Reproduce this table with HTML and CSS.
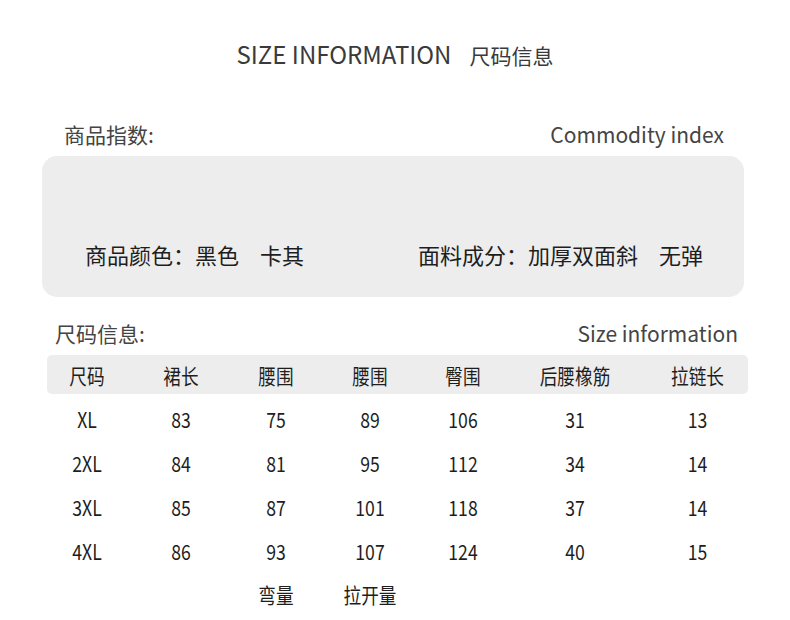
FILE: index.html
```html
<!DOCTYPE html>
<html>
<head>
<meta charset="utf-8">
<link rel="stylesheet" href="styles.css">
</head>
<body>
<div class="page">
  <h1 class="title">SIZE INFORMATION<span class="title-cn">尺码信息</span></h1>

  <div class="section-head head1">
    <span class="cn">商品指数:</span>
    <span class="en">Commodity index</span>
  </div>
  <div class="info-box">
    <div class="info-item">商品颜色：黑色<span class="gap"></span>卡其</div>
    <div class="info-item">面料成分：加厚双面斜<span class="gap"></span>无弹</div>
  </div>

  <div class="section-head head2">
    <span class="cn">尺码信息:</span>
    <span class="en">Size information</span>
  </div>

  <div class="table">
    <div class="row header">
      <span>尺码</span><span>裙长</span><span>腰围</span><span>腰围</span><span>臀围</span><span>后腰橡筋</span><span>拉链长</span>
    </div>
    <div class="row">
      <span>XL</span><span>83</span><span>75</span><span>89</span><span>106</span><span>31</span><span>13</span>
    </div>
    <div class="row">
      <span>2XL</span><span>84</span><span>81</span><span>95</span><span>112</span><span>34</span><span>14</span>
    </div>
    <div class="row">
      <span>3XL</span><span>85</span><span>87</span><span>101</span><span>118</span><span>37</span><span>14</span>
    </div>
    <div class="row">
      <span>4XL</span><span>86</span><span>93</span><span>107</span><span>124</span><span>40</span><span>15</span>
    </div>
    <div class="row note">
      <span></span><span></span><span>弯量</span><span>拉开量</span><span></span><span></span><span></span>
    </div>
  </div>
</div>
</body>
</html>
```

FILE: styles.css
```css
* { box-sizing: border-box; }
html, body {
  margin: 0;
  padding: 0;
  background: #ffffff;
}
body {
  font-family: "Noto Sans CJK SC", "Noto Sans", sans-serif;
  color: #222;
}
.page {
  width: 790px;
  height: 620px;
  padding-top: 37px;
  overflow: hidden;
}
.title {
  margin: 0;
  text-align: center;
  font-size: 24px;
  font-weight: 400;
  line-height: 34px;
  color: #3a3a3a;
  letter-spacing: 0;
}
.title-cn {
  margin-left: 18px;
  font-size: 21px;
}
.section-head {
  display: flex;
  justify-content: space-between;
  align-items: center;
  font-size: 21px;
  line-height: 28px;
  color: #444;
}
.head1 {
  margin-top: 48px;
  padding: 0 66px 0 64px;
}
.head2 {
  margin-top: 22px;
  padding: 0 52px 0 55px;
}
.info-box {
  margin: 8px 46px 0 42px;
  height: 141px;
  background: #ededed;
  border-radius: 15px;
  display: flex;
  align-items: flex-end;
  padding: 0 41px 28px 43px;
  justify-content: space-between;
  font-size: 22px;
  line-height: 30px;
  color: #1e1e1e;
}
.gap { display: inline-block; width: 21px; }
.table {
  margin: 8px 42px 0 47px;
}
.row {
  display: grid;
  grid-template-columns: 80px 108px 82px 106px 80px 144px 101px;
  align-items: center;
  height: 44px;
  font-size: 21px;
  color: #1e1e1e;
}
.row span {
  display: block;
  text-align: center;
  transform: scaleX(0.84);
}
.row.header {
  height: 39px;
  background: #ededed;
  border-radius: 5px;
  margin-bottom: 3px;
}
.row.note {
  margin-top: -1px;
}
```
